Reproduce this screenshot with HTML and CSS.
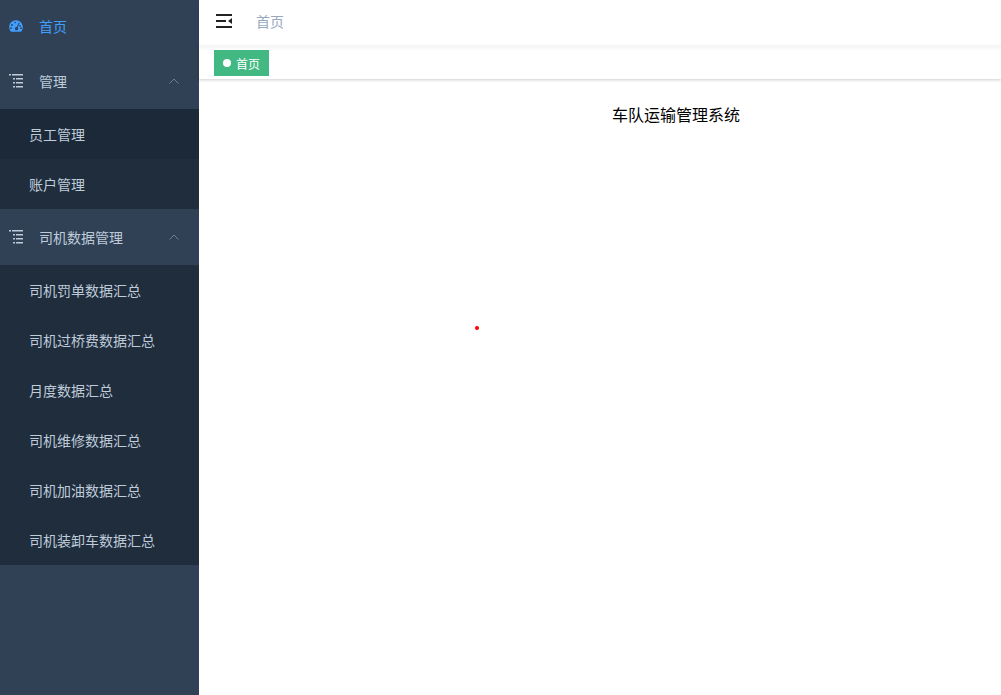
FILE: index.html
```html
<!DOCTYPE html>
<html lang="zh-CN">
<head>
    <meta charset="UTF-8">
    <meta name="viewport" content="width=device-width, initial-scale=1.0">
    <title>车队运输管理系统</title>
    <link rel="stylesheet" href="styles.css">
</head>
<body>
    <div class="sidebar">
        <div class="menu-item home">
            <svg class="menu-icon" viewBox="0 0 14 12" width="14" height="12">
                <path fill="#409eff" fill-rule="evenodd" d="M7 0.2C3.2 0.2 0.2 3.2 0.2 7c0 1.700 0.500 3 1.300 4.300 0.200 0.300 0.500 0.500 0.900 0.500h9.200c0.400 0 0.700-0.200 0.900-0.500 0.800-1.300 1.300-2.600 1.300-4.300C13.800 3.200 10.800 0.200 7 0.200zM3 4.100a0.900 0.900 0 1 1 0 1.800 0.900 0.900 0 0 1 0-1.800zM6.100 1.700a0.800 0.800 0 1 1 0 1.600 0.800 0.800 0 0 1 0-1.600zM9.700 2.600l0.900 0.400-1.900 4.300a1.700 1.700 0 1 1-0.900-0.400zM11 4.900a0.900 0.900 0 1 1 0 1.800 0.900 0.900 0 0 1 0-1.800zM2 7.300a0.900 0.900 0 1 1 0 1.800 0.900 0.900 0 0 1 0-1.800zM12 7.300a0.900 0.900 0 1 1 0 1.800 0.900 0.900 0 0 1 0-1.800z"/>
            </svg>
            <span>首页</span>
        </div>

        <div class="menu-item">
            <svg class="menu-icon" viewBox="0 0 14 14" width="14" height="14">
                <path fill="#bfcbd9" d="M0 0h2v1.500H0zM3 0h11v1.500H3zM4 4h2v1.500H4zM7 4h7v1.500H7zM4 8h2v1.500H4zM7 8h7v1.500H7zM4 12h2v1.500H4zM7 12h7v1.500H7z"/>
            </svg>
            <span>管理</span>
            <svg class="arrow" viewBox="0 0 10 6" width="10" height="6">
                <path fill="none" stroke="#6f7f8f" stroke-width="1" d="M0.500 5.500L5 1l4.500 4.500"/>
            </svg>
        </div>
        <div class="sub-menu">
            <div class="sub-item active">员工管理</div>
            <div class="sub-item">账户管理</div>
        </div>

        <div class="menu-item">
            <svg class="menu-icon" viewBox="0 0 14 14" width="14" height="14">
                <path fill="#bfcbd9" d="M0 0h2v1.500H0zM3 0h11v1.500H3zM4 4h2v1.500H4zM7 4h7v1.500H7zM4 8h2v1.500H4zM7 8h7v1.500H7zM4 12h2v1.500H4zM7 12h7v1.500H7z"/>
            </svg>
            <span>司机数据管理</span>
            <svg class="arrow" viewBox="0 0 10 6" width="10" height="6">
                <path fill="none" stroke="#6f7f8f" stroke-width="1" d="M0.500 5.500L5 1l4.500 4.500"/>
            </svg>
        </div>
        <div class="sub-menu">
            <div class="sub-item">司机罚单数据汇总</div>
            <div class="sub-item">司机过桥费数据汇总</div>
            <div class="sub-item">月度数据汇总</div>
            <div class="sub-item">司机维修数据汇总</div>
            <div class="sub-item">司机加油数据汇总</div>
            <div class="sub-item">司机装卸车数据汇总</div>
        </div>
    </div>

    <div class="main">
        <div class="navbar">
            <svg class="hamburger" viewBox="0 0 16 14" width="16" height="14">
                <path fill="#222" d="M0 0h16v2H0zM0 6h10v2H0zM0 12h16v2H0zM16 4v6l-4-3z"/>
            </svg>
            <span class="crumb">首页</span>
        </div>
        <div class="tags">
            <div class="tag"><i class="tag-dot"></i>首页</div>
        </div>
        <div class="content">
            <h1 class="title">车队运输管理系统</h1>
            <i class="red-dot"></i>
        </div>
    </div>
</body>
</html>
```

FILE: styles.css
```css
body {
    margin: 0;
    height: 695px;
    overflow: hidden;
    display: flex;
    font-family: "Noto Sans CJK SC", "Liberation Sans", sans-serif;
    background-color: #fff;
}

.sidebar {
    width: 199px;
    flex-shrink: 0;
    background-color: #304156;
    font-size: 14px;
    color: #bfcbd9;
}

.menu-item {
    height: 56px;
    display: flex;
    align-items: center;
    padding: 0 20px 0 9px;
}

.menu-item.home {
    height: 52px;
    padding-bottom: 1px;
    color: #409eff;
}

.menu-icon {
    width: 14px;
    margin-right: 16px;
    flex-shrink: 0;
}

.arrow {
    margin-left: auto;
}

.sub-menu {
    background-color: #1f2d3d;
}

.sub-item {
    height: 50px;
    line-height: 50px;
    padding-left: 29px;
}

.sub-item.active {
    background-color: #1c2939;
}

.main {
    flex: 1;
    position: relative;
}

.navbar {
    height: 46px;
    display: flex;
    align-items: center;
    padding: 0 0 5px 17px;
    box-sizing: border-box;
    box-shadow: 0 1px 4px rgba(0, 21, 41, 0.08);
}

.hamburger {
    margin-right: 24px;
}

.crumb {
    font-size: 14px;
    color: #97a8be;
}

.tags {
    height: 33px;
    box-sizing: border-box;
    padding: 4px 0 0 15px;
    box-shadow: 0 1px 3px rgba(0, 0, 0, 0.2);
}

.tag {
    width: 55px;
    height: 26px;
    box-sizing: border-box;
    padding-left: 9px;
    display: flex;
    align-items: center;
    background-color: #42b983;
    color: #fff;
    font-size: 12px;
}

.tag-dot {
    width: 8px;
    height: 8px;
    border-radius: 50%;
    background-color: #fff;
    margin-right: 5px;
}

.title {
    margin: 0;
    padding: 24px 0 0 152px;
    font-size: 16px;
    font-weight: normal;
    line-height: 22px;
    text-align: center;
    color: #000;
}

.red-dot {
    position: absolute;
    left: 276px;
    top: 326px;
    width: 4px;
    height: 4px;
    border-radius: 50%;
    background-color: #f00;
}
```
